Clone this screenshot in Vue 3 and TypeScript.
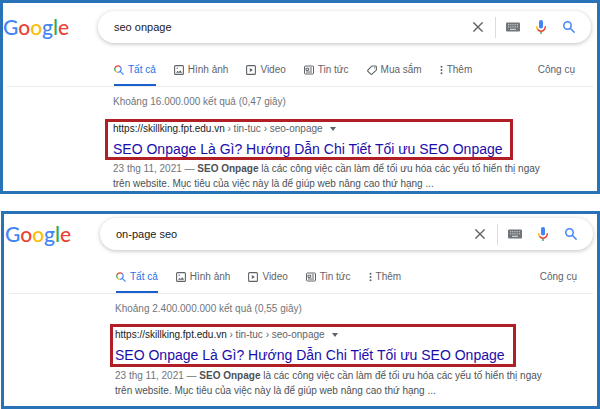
<script setup lang="ts">
import { ref } from 'vue'

type IconName = 'all' | 'image' | 'video' | 'news' | 'tag' | 'more'

interface Tab {
  label: string
  icon: IconName
}

interface Panel {
  id: string
  query: string
  stats: string
  tabs: Tab[]
}

const all: Tab = { label: 'Tất cả', icon: 'all' }
const images: Tab = { label: 'Hình ảnh', icon: 'image' }
const video: Tab = { label: 'Video', icon: 'video' }
const news: Tab = { label: 'Tin tức', icon: 'news' }
const shopping: Tab = { label: 'Mua sắm', icon: 'tag' }
const more: Tab = { label: 'Thêm', icon: 'more' }

const panels = ref<Panel[]>([
  {
    id: 'first',
    query: 'seo onpage',
    stats: 'Khoảng 16.000.000 kết quả (0,47 giây)',
    tabs: [all, images, video, news, shopping, more],
  },
  {
    id: 'second',
    query: 'on-page seo',
    stats: 'Khoảng 2.400.000.000 kết quả (0,55 giây)',
    tabs: [all, images, video, news, more],
  },
])

const logo = [
  { letter: 'G', tone: 'blue' },
  { letter: 'o', tone: 'red' },
  { letter: 'o', tone: 'yellow' },
  { letter: 'g', tone: 'blue' },
  { letter: 'l', tone: 'green' },
  { letter: 'e', tone: 'red' },
]
</script>

<template>
  <main class="page">
    <section v-for="panel in panels" :key="panel.id" class="panel" :class="panel.id">
      <header class="top">
        <a class="logo" href="#"><span v-for="(part, i) in logo" :key="i" :class="part.tone">{{ part.letter }}</span></a>
        <form class="search" role="search" @submit.prevent>
          <input v-model="panel.query" class="query" type="text" aria-label="Tìm kiếm" />
          <button class="tool" type="button" aria-label="Xóa" @click="panel.query = ''">
            <svg width="10" height="10" viewBox="0 0 10 10"><path d="M.4.4l9.2 9.2M9.6.4L.4 9.6" stroke="#5f6368" stroke-width="1.4" /></svg>
          </button>
          <span class="separator"></span>
          <button class="tool" type="button" aria-label="Bàn phím">
            <svg width="14" height="10" viewBox="0 0 14 10">
              <rect y=".5" width="14" height="9" rx="1" fill="#70757a" />
              <path d="M2 2.7h10M2 4.9h10" stroke="#d5d7d9" stroke-width="1" stroke-dasharray="1 .8" />
              <path d="M4 7.3h6" stroke="#e4e5e6" stroke-width="1" />
            </svg>
          </button>
          <button class="tool mic" type="button" aria-label="Tìm kiếm bằng giọng nói">
            <svg width="12" height="16" viewBox="0 0 12 16">
              <rect x="4" y="1" width="4" height="8.5" rx="1.8" fill="#4285f4" />
              <path d="M5.3 12h1.4v3H5.3z" fill="#34a853" />
              <path d="M1.7 7.2c0 1.6.5 2.8 1.4 3.6" fill="none" stroke="#fbbc04" stroke-width="1.5" />
              <path d="M2.7 10.5c1.8 2.2 5 2.2 6.7 0 .6-.8.9-1.9.9-3.3" fill="none" stroke="#ea4335" stroke-width="1.5" />
            </svg>
          </button>
          <button class="tool" type="submit" aria-label="Tìm">
            <svg width="12" height="12" viewBox="0 0 12 12" fill="none" stroke="#4285f4" stroke-width="1.5">
              <circle cx="4.5" cy="4.5" r="3.7" /><path d="M7.2 7.2l4.4 4.4" />
            </svg>
          </button>
        </form>
      </header>

      <nav class="nav">
        <a v-for="tab in panel.tabs" :key="tab.label" class="tab" :class="[tab.icon, { active: tab.icon === 'all' }]" href="#">
          <svg v-if="tab.icon === 'all'" width="10" height="10" viewBox="0 0 10 10" fill="none" stroke-width="1.2">
            <path d="M1.6 6.3A3.3 3.3 0 0 1 1 3" stroke="#34a853" />
            <path d="M.9 3.4A3.3 3.3 0 0 1 4 .8a3.3 3.3 0 0 1 2.4 1" stroke="#ea4335" />
            <path d="M1.4 6A3.3 3.3 0 0 0 4 7.3" stroke="#fbbc04" />
            <path d="M6.2 1.7A3.3 3.3 0 0 1 4 7.3M6.3 6.4l3.2 3.2" stroke="#4285f4" />
          </svg>
          <svg v-else-if="tab.icon === 'image'" width="10" height="10" viewBox="0 0 10 10" fill="none" stroke="#5f6368" stroke-width="1.1">
            <rect x=".6" y=".6" width="8.8" height="8.8" rx="1" />
            <path d="M2 7.8l1.7-2 1.2 1.3 1.4-1.8L8.2 7.8z" fill="#5f6368" stroke="none" /><circle cx="3.2" cy="3.2" r=".7" fill="#5f6368" stroke="none" />
          </svg>
          <svg v-else-if="tab.icon === 'video'" width="10" height="10" viewBox="0 0 10 10">
            <rect x=".6" y=".6" width="8.8" height="8.8" rx="1" fill="none" stroke="#5f6368" stroke-width="1.1" />
            <path d="M3.8 3l3.1 2-3.1 2z" fill="#5f6368" />
          </svg>
          <svg v-else-if="tab.icon === 'news'" width="10" height="10" viewBox="0 0 10 10" fill="none" stroke="#5f6368">
            <rect x=".5" y="1" width="9" height="8" rx="1" />
            <path d="M2 3.2h2.6v2.2H2zM5.8 3h2.2M5.8 5h2.2M2 7h6" />
          </svg>
          <svg v-else-if="tab.icon === 'tag'" width="10" height="10" viewBox="0 0 10 10" fill="none" stroke="#5f6368" stroke-width="1.1">
            <path d="M5.3 1h3.2q.9 0 .9.9v2.5q0 .5-.4.9L5 9.1q-.6.6-1.2 0L.9 6.3q-.6-.6 0-1.2L4.5 1.4q.4-.4.8-.4z" />
            <circle cx="7.6" cy="2.8" r=".6" fill="#5f6368" stroke="none" />
          </svg>
          <svg v-else width="3" height="10" viewBox="0 0 3 10" fill="#5f6368">
            <circle cx="1.5" cy="1.7" r="1" /><circle cx="1.5" cy="5" r="1" /><circle cx="1.5" cy="8.3" r="1" />
          </svg>
          <span>{{ tab.label }}</span>
        </a>
        <button class="tools" type="button">Công cụ</button>
      </nav>

      <div class="results">
        <p class="stats">{{ panel.stats }}</p>
        <article>
          <div class="highlight">
            <div class="address">
              <cite>https://skillking.fpt.edu.vn<span class="crumb"> › tin-tuc › seo-onpage</span></cite>
              <button class="menu" type="button" aria-label="Tùy chọn"><svg width="6" height="4" viewBox="0 0 6 4"><path d="M0 0h6L3 4z" fill="#5f6368" /></svg></button>
            </div>
            <h3><a href="#">SEO Onpage Là Gì? Hướng Dẫn Chi Tiết Tối ưu SEO Onpage</a></h3>
          </div>
          <p class="snippet">
            <span class="date">23 thg 11, 2021 — </span><b>SEO Onpage</b> là các công việc cần làm để tối ưu hóa các yếu tố hiển thị ngay trên website. Mục tiêu của việc này là để giúp web nâng cao thứ hạng ...
          </p>
        </article>
      </div>
    </section>
  </main>
</template>

<style>
body {
  margin: 0;
  background: #fff;
}
</style>

<style scoped>
.page {
  display: flex;
  flex-direction: column;
  gap: 17px;
  font-family: 'Liberation Sans', Arial, sans-serif;
  font-size: 10px;
  line-height: 14px;
  color: #4d5156;
}
.panel {
  border: 3px solid #2872b8;
  padding-top: 8px;
}
.panel.second {
  margin-left: 1px;
  padding: 4px 0 8px 1px;
}
button {
  padding: 0;
  border: 0;
  background: none;
  font: inherit;
  color: inherit;
  cursor: pointer;
}
a {
  color: inherit;
  text-decoration: none;
}
svg {
  display: block;
  flex: none;
}
.top {
  display: flex;
  align-items: center;
  padding-right: 6px;
}
.second .top {
  padding-right: 4px;
}
.logo {
  width: 95px;
  font-family: Lato, sans-serif;
  font-size: 21px;
  font-weight: 500;
  line-height: 30px;
}
.blue { color: #4285f4; }
.red { color: #ea4335; }
.yellow { color: #fbbc05; }
.green { color: #34a853; }
.search {
  flex: 1;
  min-width: 0;
  height: 32px;
  box-sizing: border-box;
  display: flex;
  align-items: center;
  padding: 0 16px;
  border-radius: 16px;
  background: #fff;
  box-shadow: 0 1px 4px rgba(32, 33, 36, 0.28);
}
.query {
  flex: 1;
  min-width: 0;
  padding: 0;
  border: 0;
  outline: 0;
  background: none;
  font: inherit;
  font-size: 11px;
  color: #202124;
}
.separator {
  width: 1px;
  height: 21px;
  margin: 0 10px 0 12px;
  background: #dadce0;
}
.mic {
  margin: 0 16px 0 15px;
}
.nav {
  display: flex;
  gap: 18px;
  margin: 20px 4px 0;
  padding: 0 18px 0 107px;
  border-bottom: 1px solid #ebebeb;
  color: #5f6368;
}
.second .nav {
  padding-right: 16px;
}
.tab {
  display: flex;
  align-items: center;
  gap: 4px;
  padding-bottom: 7px;
  border-bottom: 2px solid transparent;
}
.tab.active {
  color: #1a73e8;
  border-color: #1a5fd0;
}
.tools {
  margin: 0 0 9px auto;
}
.results {
  padding: 8px 50px 0 110px;
}
.stats {
  margin: 0;
  color: #70757a;
}
.highlight {
  width: fit-content;
  margin: 10px 0 1px -8px;
  padding: 0 7px 0 5px;
  border: 3px solid #b11f24;
}
.second .highlight {
  margin: 8px 0 1px -5px;
  padding: 1px 8px 1px 2px;
}
.address {
  display: flex;
  align-items: center;
  gap: 7px;
}
cite {
  font-style: normal;
  color: #202124;
}
.crumb {
  color: #5f6368;
}
h3 {
  margin: 5px 0 0;
  font-size: 14px;
  font-weight: 400;
  line-height: 16px;
  white-space: nowrap;
  color: #1a0dab;
}
.snippet {
  margin: 0;
  line-height: 15px;
}
.date {
  color: #70757a;
}
</style>
